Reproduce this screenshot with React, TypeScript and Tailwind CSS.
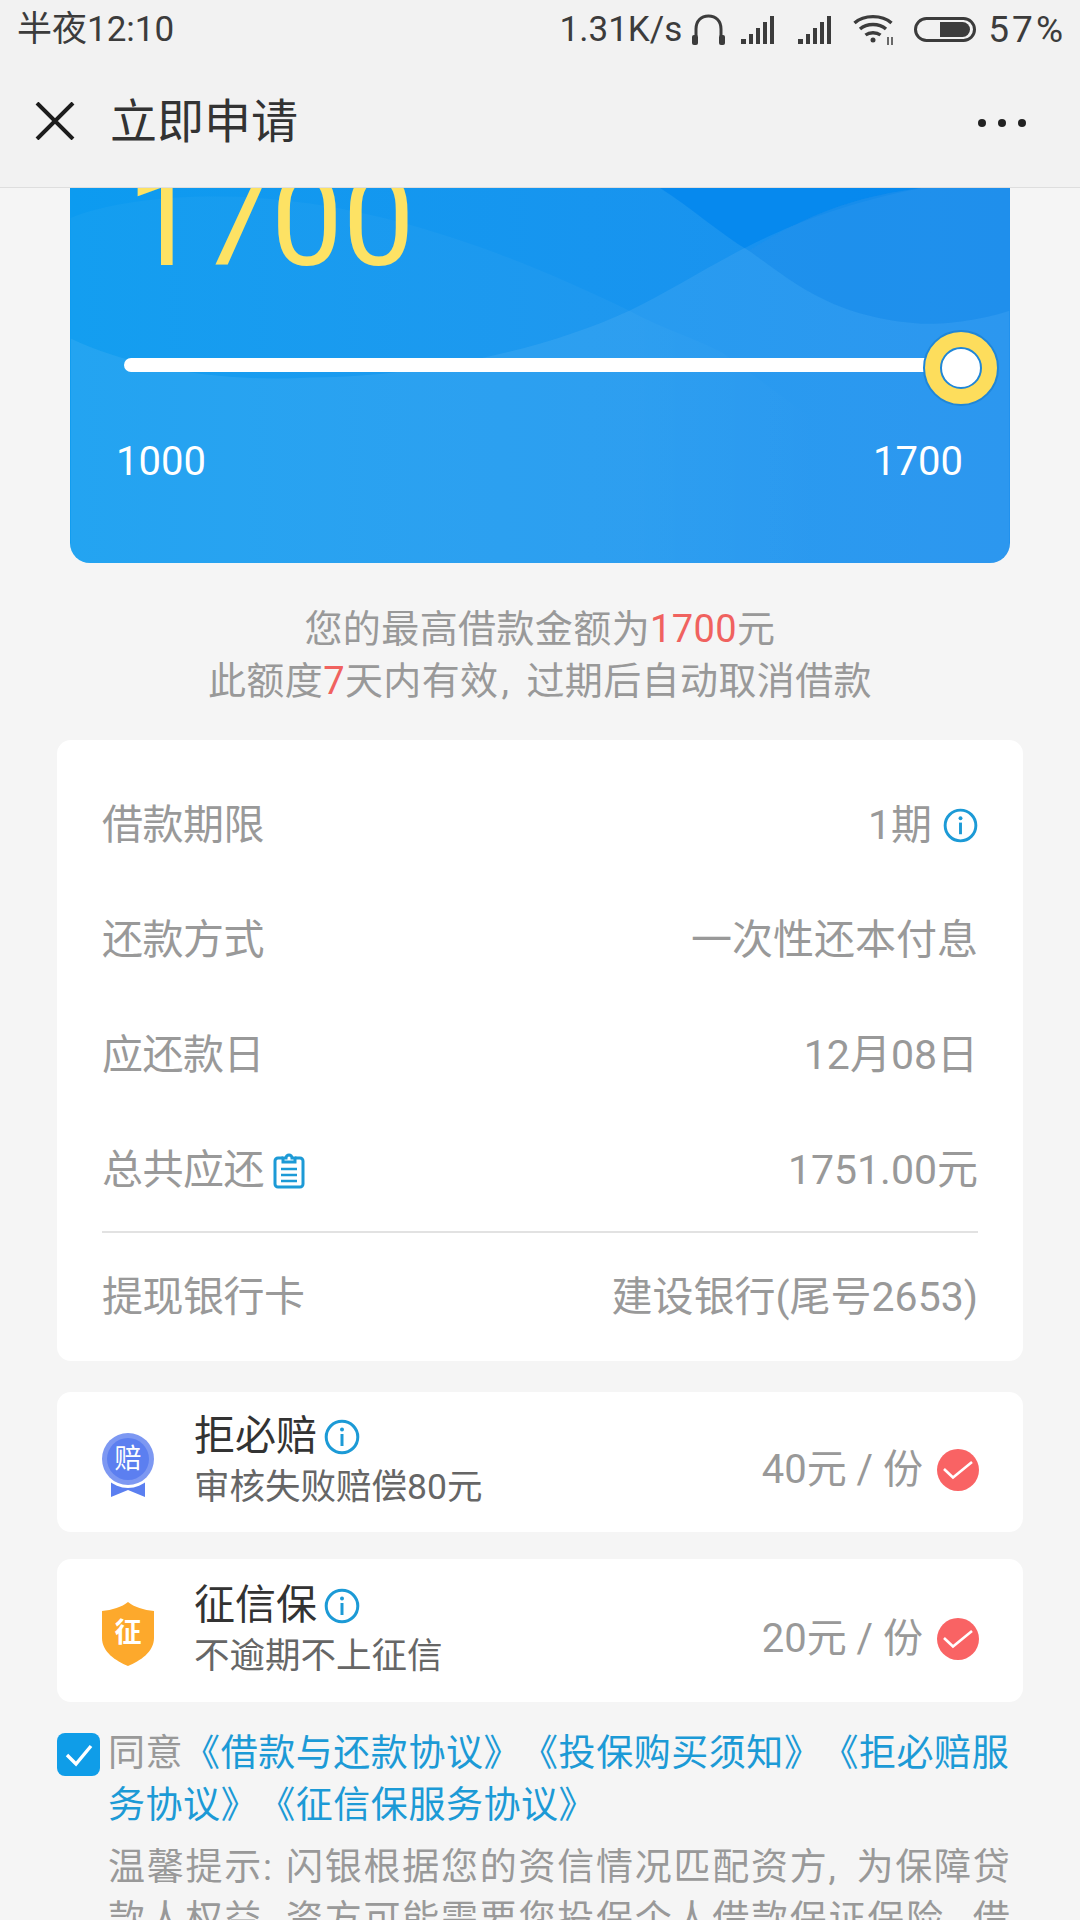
import React from 'react';

function InfoIcon({ className }: { className?: string }) {
  return (
    <svg viewBox="0 0 36 36" className={className} fill="none">
      <circle cx="18" cy="18" r="15.8" stroke="#1c9ad6" strokeWidth="3" />
      <circle cx="18" cy="10.5" r="2" fill="#1c9ad6" />
      <path d="M18 15v12" stroke="#1c9ad6" strokeWidth="3" />
    </svg>
  );
}

function RedCheck() {
  return (
    <svg viewBox="0 0 42 42" className="w-[42px] h-[42px] ml-[14px] shrink-0">
      <circle cx="21" cy="21" r="21" fill="#f96364" />
      <path d="M7 20l9 8.5L35 13" fill="none" stroke="#fff" strokeWidth="2.6" />
    </svg>
  );
}

function SignalIcon() {
  return (
    <svg viewBox="0 0 40 29" className="w-[40px] h-[29px]" fill="#3c3c3c">
      <rect x="0" y="24" width="5" height="5" />
      <rect x="8" y="19" width="4" height="10" />
      <rect x="15" y="13" width="4" height="16" />
      <rect x="22" y="7" width="4" height="22" />
      <rect x="29" y="1" width="4" height="28" />
    </svg>
  );
}

function StatusBar() {
  return (
    <div className="h-[58px] pl-[17px] pr-[17px] flex items-center justify-between text-[35px] text-[#3c3c3c]">
      <span className="leading-none">半夜12:10</span>
      <div className="flex items-center">
        <span className="leading-none">1.31K/s</span>
        <svg viewBox="0 0 35 31" className="w-[35px] h-[31px] ml-[9px]" fill="none">
          <path d="M5 22V15C5 7 10 2 17.500 2S30 7 30 15v7" stroke="#3c3c3c" strokeWidth="3" />
          <rect x="1" y="21" width="6" height="10" rx="2" fill="#3c3c3c" />
          <rect x="28" y="21" width="6" height="10" rx="2" fill="#3c3c3c" />
        </svg>
        <div className="ml-[15px]"><SignalIcon /></div>
        <div className="ml-[17px]"><SignalIcon /></div>
        <svg viewBox="0 0 41 31" className="w-[41px] h-[31px] ml-[15px]" fill="none" stroke="#3c3c3c" strokeWidth="3.400">
          <path d="M1.500 9C11 .5 29 .5 38.500 9" />
          <path d="M7 15c7-6 19-6 26 0" />
          <path d="M12.500 21c4-3 11-3 15 0" />
          <circle cx="20" cy="26" r="2.500" fill="#3c3c3c" stroke="none" />
          <path d="M35 23v8M39 23v8" strokeWidth="1.500" />
        </svg>
        <div className="ml-[20px] w-[62px] h-[25px] rounded-full border-[3px] border-[#3c3c3c] flex items-center justify-end pr-[3px]">
          <div className="w-[30px] h-[15px] rounded-r-full rounded-l-[2px] bg-[#3c3c3c]" />
        </div>
        <span className="ml-[12px] text-[37px] leading-none tracking-[3px] -mr-[3px]">57%</span>
      </div>
    </div>
  );
}

function Header() {
  return (
    <div className="h-[130px] border-b border-[#dedede] flex items-start">
      <svg viewBox="0 0 40 38" className="w-[40px] h-[38px] ml-[35px] mt-[44px] shrink-0" fill="none" stroke="#1d1d1d" strokeWidth="4">
        <path d="M2 1l36 36M38 1L2 37" />
      </svg>
      <span className="ml-[35px] mt-[34px] text-[47px] leading-[60px] text-[#333]">立即申请</span>
      <div className="ml-auto mr-[54px] mt-[61px] flex gap-[12px]">
        <span className="w-[8px] h-[8px] rounded-full bg-[#222]" />
        <span className="w-[8px] h-[8px] rounded-full bg-[#222]" />
        <span className="w-[8px] h-[8px] rounded-full bg-[#222]" />
      </div>
    </div>
  );
}

function AmountCard() {
  return (
    <div className="relative mx-[70px] h-[375px] rounded-b-[20px] overflow-hidden bg-linear-to-r from-[#0c9bf0] to-[#1d90ee]">
      {/* background waves */}
      <svg viewBox="0 0 941 376" className="absolute inset-0 w-full h-full">
        <defs>
          <linearGradient id="hillFade" x1="0" y1="0" x2="1" y2="0">
            <stop offset="0" stopColor="#fff" stopOpacity="0.03" />
            <stop offset="0.6" stopColor="#fff" stopOpacity="0.03" />
            <stop offset="0.8" stopColor="#fff" stopOpacity="0" />
          </linearGradient>
        </defs>
        <path d="M591 0C625 22 650 45 680 63C740 25 790 8 853 0Z" fill="#0086ee" fillOpacity="0.75" />
        <path d="M0 30C50 10 137 4 210 12C340 25 460 75 560 123C590 140 625 150 653 165L941 376H0Z" fill="url(#hillFade)" />
        <path d="M0 151C60 180 150 195 240 190C340 190 470 165 560 123C640 85 700 30 853 0C885 -5 920 -3 941 0V376H0Z" fill="#fff" fillOpacity="0.07" />
        <path d="M680 63C720 90 760 130 853 136C885 137 920 130 941 123V0H853C790 8 740 25 680 63Z" fill="#1287ea" fillOpacity="0.5" />
      </svg>
      <div className="relative">
        <div className="pl-[57px] -mt-[42px] h-[250px] text-[128px] leading-[150px] text-[#fde264]">1700</div>
        <div className="relative flex items-center h-[76px] -mt-[66px] pl-[54px]">
          <div className="w-[802px] h-[14px] -mt-[6px] rounded-l-full bg-white" />
          <div className="w-[76px] h-[76px] -ml-[3px] rounded-full bg-[#fddd5c] border-2 border-[#1f86d8] flex items-center justify-center shrink-0">
            <div className="w-[42px] h-[42px] rounded-full bg-white border-2 border-[#1f86d8]" />
          </div>
        </div>
        <div className="mt-[33px] pl-[46px] pr-[47px] flex justify-between text-[40px] leading-[46px] text-white">
          <span>1000</span>
          <span>1700</span>
        </div>
      </div>
    </div>
  );
}

function Row({ label, extra, children }: { label: string; extra?: React.ReactNode; children: React.ReactNode }) {
  return (
    <div className="h-[115px] flex items-center justify-between">
      <div className="flex items-center">
        <span className="tracking-[-0.5px]">{label}</span>
        {extra}
      </div>
      <div className="flex items-center">{children}</div>
    </div>
  );
}

function LoanDetails() {
  return (
    <div className="mx-[57px] mt-[33px] h-[621px] rounded-[14px] bg-white px-[45px] pt-[28px] text-[41px] text-[#999]">
      <Row label="借款期限">
        <span>1期</span>
        <InfoIcon className="w-[35px] h-[35px] ml-[11px]" />
      </Row>
      <Row label="还款方式">一次性还本付息</Row>
      <Row label="应还款日">12月08日</Row>
      <Row
        label="总共应还"
        extra={
          <svg viewBox="0 0 32 36" className="w-[32px] h-[36px] ml-[9px]" fill="none" stroke="#1c9ad6" strokeWidth="3">
            <path d="M10 5H5a3 3 0 0 0-3 3v23a3 3 0 0 0 3 3h22a3 3 0 0 0 3-3V8a3 3 0 0 0-3-3h-5" />
            <path d="M10 9V5h3a3 3 0 0 1 6 0h3v4z" />
            <path d="M8 16h16M8 22h16M8 28h16" strokeWidth="2.400" />
          </svg>
        }
      >
        1751.00元
      </Row>
      <div className="mt-[3px] h-[2px] bg-[#e2e2e2]" />
      <div className="h-[129px] flex items-center justify-between">
        <span className="tracking-[-0.5px]">提现银行卡</span>
        <span>建设银行(尾号2653)</span>
      </div>
    </div>
  );
}

function AddonCard({ icon, title, sub, price, className }: { icon: React.ReactNode; title: string; sub: string; price: string; className: string }) {
  return (
    <div className={`mx-[57px] rounded-[14px] bg-white pl-[45px] pr-[44px] flex items-center ${className}`}>
      <div className="w-[92px] mt-[6px] shrink-0">{icon}</div>
      <div>
        <div className="flex items-center h-[50px]">
          <span className="text-[41px] text-[#333]">{title}</span>
          <InfoIcon className="w-[36px] h-[36px] ml-[7px]" />
        </div>
        <div className="text-[35.5px] leading-[50px] text-[#666]">{sub}</div>
      </div>
      <div className="ml-auto pt-[16px] flex items-center">
        <span className="text-[40px] text-[#999]">{price}</span>
        <RedCheck />
      </div>
    </div>
  );
}

export default function App() {
  return (
    <div className="w-[1080px] h-[1920px] overflow-hidden bg-[#f5f5f5] font-[Roboto,'Noto_Sans_CJK_SC',sans-serif]">
      <div className="bg-[#f2f2f2]">
        <StatusBar />
        <Header />
      </div>
      <AmountCard />

      <p className="mt-[40px] text-center text-[38px] leading-[52px] text-[#999] tracking-[0.4px]">
        您的最高借款金额为<span className="text-[#f0625f]">1700</span>元
        <br />
        此额度<span className="text-[#f0625f]">7</span>天内有效<span className="ml-[3px] mr-[17px]">,</span>过期后自动取消借款
      </p>

      <LoanDetails />

      <AddonCard
        className="mt-[31px] h-[140px]"
        title="拒必赔"
        sub="审核失败赔偿80元"
        price="40元 / 份"
        icon={
          <div className="relative w-[52px] h-[64px]">
            <svg viewBox="0 0 52 64" className="w-[52px] h-[64px]">
              <path d="M9 42h34v22L26 57 9 64z" fill="#5b7ff0" />
              <circle cx="26" cy="26" r="29" fill="#fff" />
              <circle cx="26" cy="26" r="26" fill="#7d98f2" />
              <circle cx="26" cy="26" r="21" fill="#5c7ff0" />
            </svg>
            <span className="absolute left-0 top-0 w-[52px] h-[52px] flex items-center justify-center text-[27px] leading-none text-white">赔</span>
          </div>
        }
      />
      <AddonCard
        className="mt-[27px] h-[143px]"
        title="征信保"
        sub="不逾期不上征信"
        price="20元 / 份"
        icon={
          <div className="relative w-[52px] h-[64px]">
            <svg viewBox="0 0 52 64" className="w-[52px] h-[64px]">
              <path d="M26 0C32 5 42 8 52 9V36C52 50 38 59 26 64C14 59 0 50 0 36V9C10 8 20 5 26 0Z" fill="#fda92c" />
            </svg>
            <span className="absolute inset-0 flex items-center justify-center text-[27px] font-bold leading-none text-white">征</span>
          </div>
        }
      />

      {/* agreement */}
      <div className="mx-[57px] mt-[31px] flex items-start">
        <div className="w-[43px] h-[43px] rounded-[8px] bg-[#0f9de8] flex items-center justify-center shrink-0">
          <svg viewBox="0 0 28 24" className="w-[28px] h-[24px]" fill="none" stroke="#fff" strokeWidth="3.400">
            <path d="M2 12l9 9L26 3" />
          </svg>
        </div>
        <div className="ml-[8px] -mt-[5px] text-[37px] leading-[52px] whitespace-nowrap [text-spacing-trim:space-all]">
          <p className="text-[#1c9ad6] tracking-[0.55px]">
            <span className="text-[#999]">同意</span>《借款与还款协议》《投保购买须知》《拒必赔服
            <br />
            务协议》《征信保服务协议》
          </p>
          <p className="mt-[10px] text-[#999] tracking-[1.75px]">
            温馨提示<span className="inline-block w-[23px]">:</span>闪银根据您的资信情况匹配资方<span className="inline-block w-[28px]">,</span>为保障贷
            <br />
            款人权益<span className="inline-block w-[23px]">,</span>资方可能需要您投保个人借款保证保险<span className="inline-block w-[28px]">,</span>借
          </p>
        </div>
      </div>
    </div>
  );
}
